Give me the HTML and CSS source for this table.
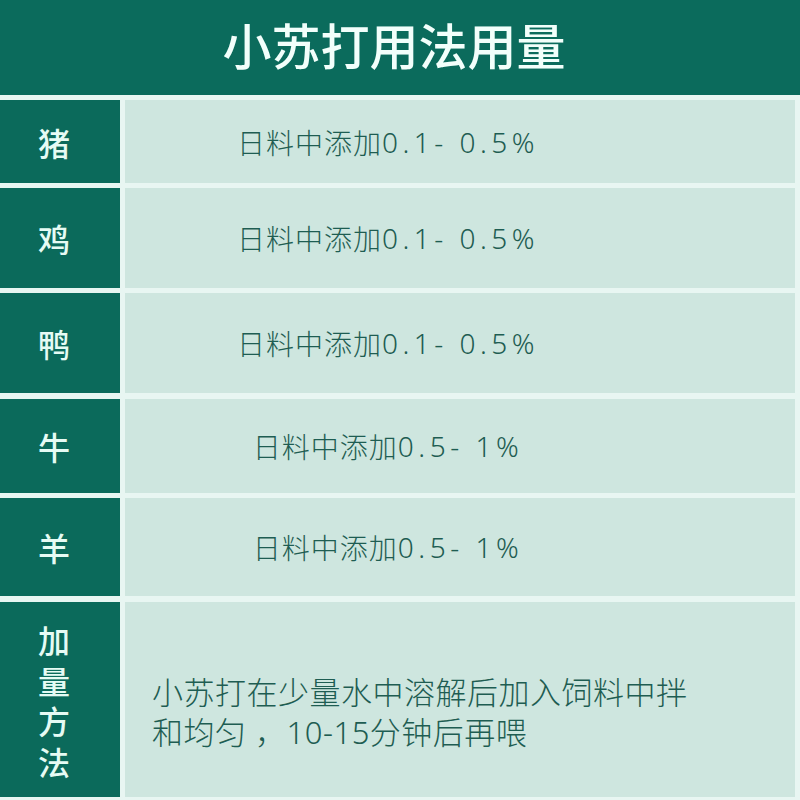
FILE: index.html
```html
<!DOCTYPE html>
<html lang="zh">
<head>
<meta charset="utf-8">
<link rel="stylesheet" href="styles.css">
</head>
<body>
<div class="page">
  <div class="header"><h1 class="title">小苏打用法用量</h1></div>
  <div class="table">
    <div class="row r1">
      <div class="label">猪</div>
      <div class="value">日料中添加<span class="num">0.1- 0.5%</span></div>
    </div>
    <div class="row r2">
      <div class="label">鸡</div>
      <div class="value">日料中添加<span class="num">0.1- 0.5%</span></div>
    </div>
    <div class="row r3">
      <div class="label">鸭</div>
      <div class="value">日料中添加<span class="num">0.1- 0.5%</span></div>
    </div>
    <div class="row r4">
      <div class="label">牛</div>
      <div class="value">日料中添加<span class="num">0.5- 1%</span></div>
    </div>
    <div class="row r5">
      <div class="label">羊</div>
      <div class="value">日料中添加<span class="num">0.5- 1%</span></div>
    </div>
    <div class="row r6">
      <div class="label"><span class="vertical">加量方法</span></div>
      <div class="value para">小苏打在少量水中溶解后加入饲料中拌<br>和均匀 ，10-15分钟后再喂</div>
    </div>
  </div>
</div>
</body>
</html>
```

FILE: styles.css
```css
html, body {
  margin: 0;
  padding: 0;
}
body {
  background: #e8f6f2;
  width: 800px;
  height: 800px;
  overflow: hidden;
  font-family: "Noto Sans", "Noto Sans CJK SC", sans-serif;
}
.page {
  display: flex;
  flex-direction: column;
  gap: 5px;
}
.header {
  height: 95px;
  background: #0b6b5c;
  display: flex;
  align-items: center;
  justify-content: center;
  padding-right: 12px;
}
.title {
  margin: 0;
  color: #f2fffb;
  font-size: 49px;
  font-weight: 500;
  letter-spacing: 0;
  font-family: "Noto Sans CJK SC", sans-serif;
  line-height: 1;
  padding-bottom: 8px;
}
.table {
  display: flex;
  flex-direction: column;
  gap: 5px;
  padding-right: 5px;
}
.row {
  display: grid;
  grid-template-columns: 120px 1fr;
  column-gap: 5px;
}
.r1 { height: 83px; }
.r2 { height: 100px; }
.r3 { height: 100px; margin-bottom: 1px; }
.r4 { height: 94px; }
.r5 { height: 98px; margin-bottom: 1px; }
.r6 { height: 195px; }
.label {
  background: #0b6a5b;
  color: #e6fbf4;
  font-family: "Noto Sans CJK SC", sans-serif;
  font-size: 32px;
  font-weight: 500;
  display: flex;
  align-items: center;
  justify-content: center;
  padding-right: 12px;
}
.vertical {
  writing-mode: vertical-rl;
  text-orientation: upright;
  letter-spacing: 8.5px;
  line-height: 1;
  padding-top: 12px;
}
.value {
  background: #cee6df;
  color: #1e5d52;
  font-size: 28px;
  font-weight: 300;
  letter-spacing: 1px;
  display: flex;
  align-items: center;
  justify-content: center;
  padding-right: 144px;
  white-space: nowrap;
}
.num {
  letter-spacing: 4.5px;
}
.value.para {
  display: block;
  font-size: 31px;
  letter-spacing: 0.5px;
  line-height: 40px;
  padding: 70px 0 0 27px;
  white-space: nowrap;
}
```
